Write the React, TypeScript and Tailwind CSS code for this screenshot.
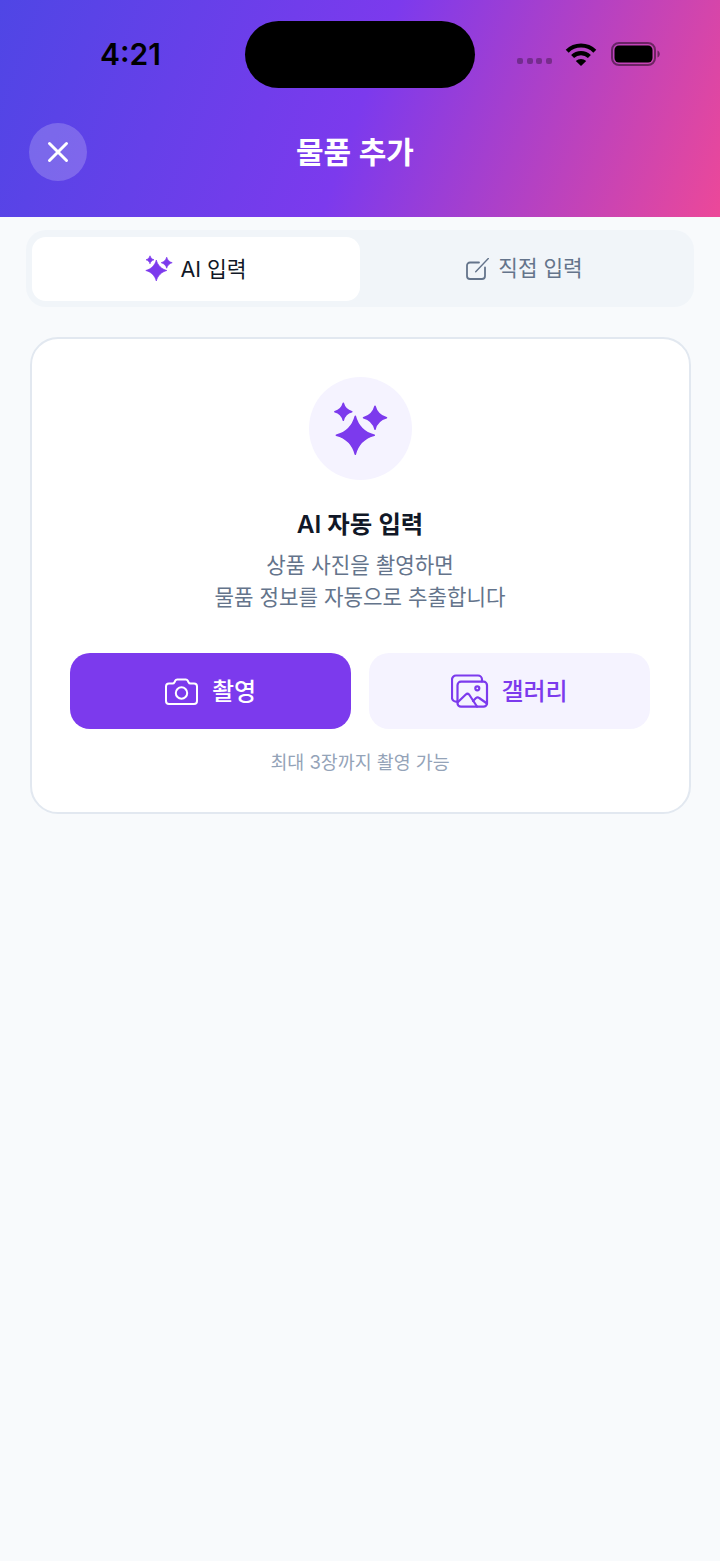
import React from "react";

const FONT = "font-['Inter','Noto_Sans_CJK_KR',sans-serif]";

type Star = [number, number, number];

function starPath([x, y, r]: Star) {
  const a = r * 0.13;
  const b = r * 0.5;
  return `M${x} ${y - r}C${x + a} ${y - b} ${x + b} ${y - a} ${x + r} ${y}C${x + b} ${y + a} ${x + a} ${y + b} ${x} ${y + r}C${x - a} ${y + b} ${x - b} ${y + a} ${x - r} ${y}C${x - b} ${y - a} ${x - a} ${y - b} ${x} ${y - r}Z`;
}

function Sparkles({ size, box, stars }: { size: number; box: number; stars: Star[] }) {
  return (
    <svg width={size} height={size} viewBox={`0 0 ${box} ${box}`} className="shrink-0">
      {stars.map((s, i) => (
        <path key={i} d={starPath(s)} fill="#7c3aed" stroke="#7c3aed" strokeWidth={box / 40} strokeLinejoin="round" />
      ))}
    </svg>
  );
}

function Wifi() {
  return (
    <svg width="32" height="24" viewBox="0 0 32 24" className="shrink-0">
      <path d="M2.2 9.2C9.8 1.6 22.2 1.6 29.8 9.2" fill="none" stroke="#000" strokeWidth="4.2" />
      <path d="M7.6 14.6C12.2 10 19.8 10 24.4 14.6" fill="none" stroke="#000" strokeWidth="4.2" />
      <path d="M10.8 19 16 24l5.2-5c-2.9-2.8-7.5-2.8-10.4 0Z" fill="#000" />
    </svg>
  );
}

function Battery() {
  return (
    <svg width="50" height="24" viewBox="0 0 50 24" className="shrink-0">
      <rect x="1" y="1" width="43" height="22" rx="7" fill="none" stroke="#000" strokeOpacity="0.45" strokeWidth="2" />
      <rect x="3.5" y="3.5" width="38" height="17" rx="4.5" fill="#000" />
      <path d="M46.5 8.5c1.4.6 2.3 2 2.3 3.5s-.9 2.9-2.3 3.5Z" fill="#000" fillOpacity="0.45" />
    </svg>
  );
}

function EditIcon() {
  return (
    <svg width="23" height="22" viewBox="0 0 23 22" fill="none" stroke="#64748b" strokeLinecap="round" strokeLinejoin="round" className="shrink-0">
      <path strokeWidth="1.800" d="M13 4.500H4a3 3 0 0 0-3 3V18a3 3 0 0 0 3 3h12a3 3 0 0 0 3-3V9.500" />
      <path strokeWidth="1.400" d="M9.700 13.700 22.300.5" />
    </svg>
  );
}

function CameraIcon() {
  return (
    <svg width="33" height="27" viewBox="0 0 33 27" fill="none" stroke="#fff" strokeWidth="2" strokeLinejoin="round" className="shrink-0">
      <path d="M4 5.500h3.500c1 0 1.600-.5 2-1.300l.7-1.400C10.600 2 11.200 1.500 12.200 1.500h8.600c1 0 1.600.5 2 1.300l.7 1.400c.4.8 1 1.300 2 1.300H29a3 3 0 0 1 3 3V23a3 3 0 0 1-3 3H4a3 3 0 0 1-3-3V8.500a3 3 0 0 1 3-3Z" />
      <circle cx="16.500" cy="15" r="5.700" />
    </svg>
  );
}

function GalleryIcon() {
  return (
    <svg width="38" height="34" viewBox="0 0 38 34" fill="none" stroke="#7c3aed" strokeWidth="2.200" strokeLinecap="round" strokeLinejoin="round" className="shrink-0">
      <path d="M6 27.500a4 4 0 0 1-5-4V5.500a4 4 0 0 1 4-4h22a4 4 0 0 1 4 4v2" />
      <rect x="6.500" y="7.700" width="29.500" height="25" rx="3.500" />
      <circle cx="26.300" cy="14.300" r="2" />
      <path d="M7 28 14.800 20.500c1-.9 2.300-.9 3.300 0L26 32.500" />
      <path d="M22 27l3-3c1-.9 2.200-.9 3.200 0L36 29.500" />
    </svg>
  );
}

export default function App() {
  return (
    <div className={`${FONT} min-h-[1561px] w-[720px] bg-[#f8fafc]`}>
      <header className="flex h-[217px] flex-col bg-[linear-gradient(110deg,#4f46e5_0%,#7c3aed_50%,#ec4899_100%)]">
        <div className="flex h-[88px] items-start pt-[21px]">
          <div className="flex h-[65px] w-[245px] items-center justify-end pr-[84px]">
            <span className="text-[30px] font-semibold leading-none text-black">4:21</span>
          </div>
          <div className="h-[67px] w-[230px] rounded-full bg-black" />
          <div className="flex h-[66px] flex-1 items-center pl-[42px]">
            <div className="mt-[14px] flex w-[35px] justify-between">
              <span className="size-[6px] rounded-[2px] bg-black/30" />
              <span className="size-[6px] rounded-[2px] bg-black/30" />
              <span className="size-[6px] rounded-[2px] bg-black/30" />
              <span className="size-[6px] rounded-[2px] bg-black/30" />
            </div>
            <div className="ml-[13px]">
              <Wifi />
            </div>
            <div className="ml-[14px]">
              <Battery />
            </div>
          </div>
        </div>
        <div className="mt-[35px] flex items-center px-[29px]">
          <button className="flex size-[58px] items-center justify-center rounded-full bg-white/20">
            <svg width="22" height="22" viewBox="0 0 22 22" fill="none" stroke="#fff" strokeWidth="3" strokeLinecap="round">
              <path d="M2.500 2.500 19.500 19.500M19.500 2.500 2.500 19.500" />
            </svg>
          </button>
          <h1 className="flex-1 text-center text-[30px] font-semibold leading-[40px] text-white">물품 추가</h1>
          <div className="w-[68px]" />
        </div>
      </header>

      <div className="mx-[26px] mt-[13px] flex h-[77px] rounded-[20px] bg-[#f1f5f9] px-[6px] py-[6.5px]">
        <button className="flex w-[328px] items-center justify-center gap-[7px] rounded-[14px] bg-white text-[21.500px] font-normal text-[#111827]">
          <Sparkles size={28} box={28} stars={[[11.3, 15.5, 10.5], [5, 4.8, 4], [21.7, 7.7, 5.5]]} />
          <span className="pt-[1px]">AI 입력</span>
        </button>
        <button className="flex flex-1 items-center justify-center gap-[9px] pl-[1px] text-[21.300px] font-normal text-[#64748b]">
          <EditIcon />
          <span className="pt-[1px]">직접 입력</span>
        </button>
      </div>

      <section className="mx-[29.500px] mt-[30px] flex h-[477px] flex-col items-center rounded-[28px] border-2 border-[#e2e8f0] bg-white px-[38.500px] pt-[38px]">
        <div className="flex size-[103px] items-center justify-center rounded-full bg-[#f5f3ff]">
          <Sparkles size={60} box={60} stars={[[25.3, 36.3, 19], [13.3, 12.7, 8.5], [45, 18.7, 11.5]]} />
        </div>
        <h2 className="mt-[26px] text-[24.400px] font-semibold leading-[36px] text-[#111827]">AI 자동 입력</h2>
        <p className="mt-[7px] text-center text-[21.200px] leading-[32px] text-[#64748b]">
          상품 사진을 촬영하면
          <br />
          물품 정보를 자동으로 추출합니다
        </p>
        <div className="mt-[40px] flex w-full gap-[18px]">
          <button className="flex h-[76px] flex-1 items-center justify-center gap-[14px] rounded-[20px] bg-[#7c3aed] text-[24px] font-[550] text-white">
            <CameraIcon />
            <span className="pt-[2px]">촬영</span>
          </button>
          <button className="flex h-[76px] flex-1 items-center justify-center gap-[12px] rounded-[20px] bg-[#f5f3ff] text-[24px] font-[550] text-[#7c3aed]">
            <GalleryIcon />
            <span className="pt-[2px]">갤러리</span>
          </button>
        </div>
        <p className="mt-[20px] text-[18.400px] leading-[26px] text-[#94a3b8]">최대 3장까지 촬영 가능</p>
      </section>
    </div>
  );
}
